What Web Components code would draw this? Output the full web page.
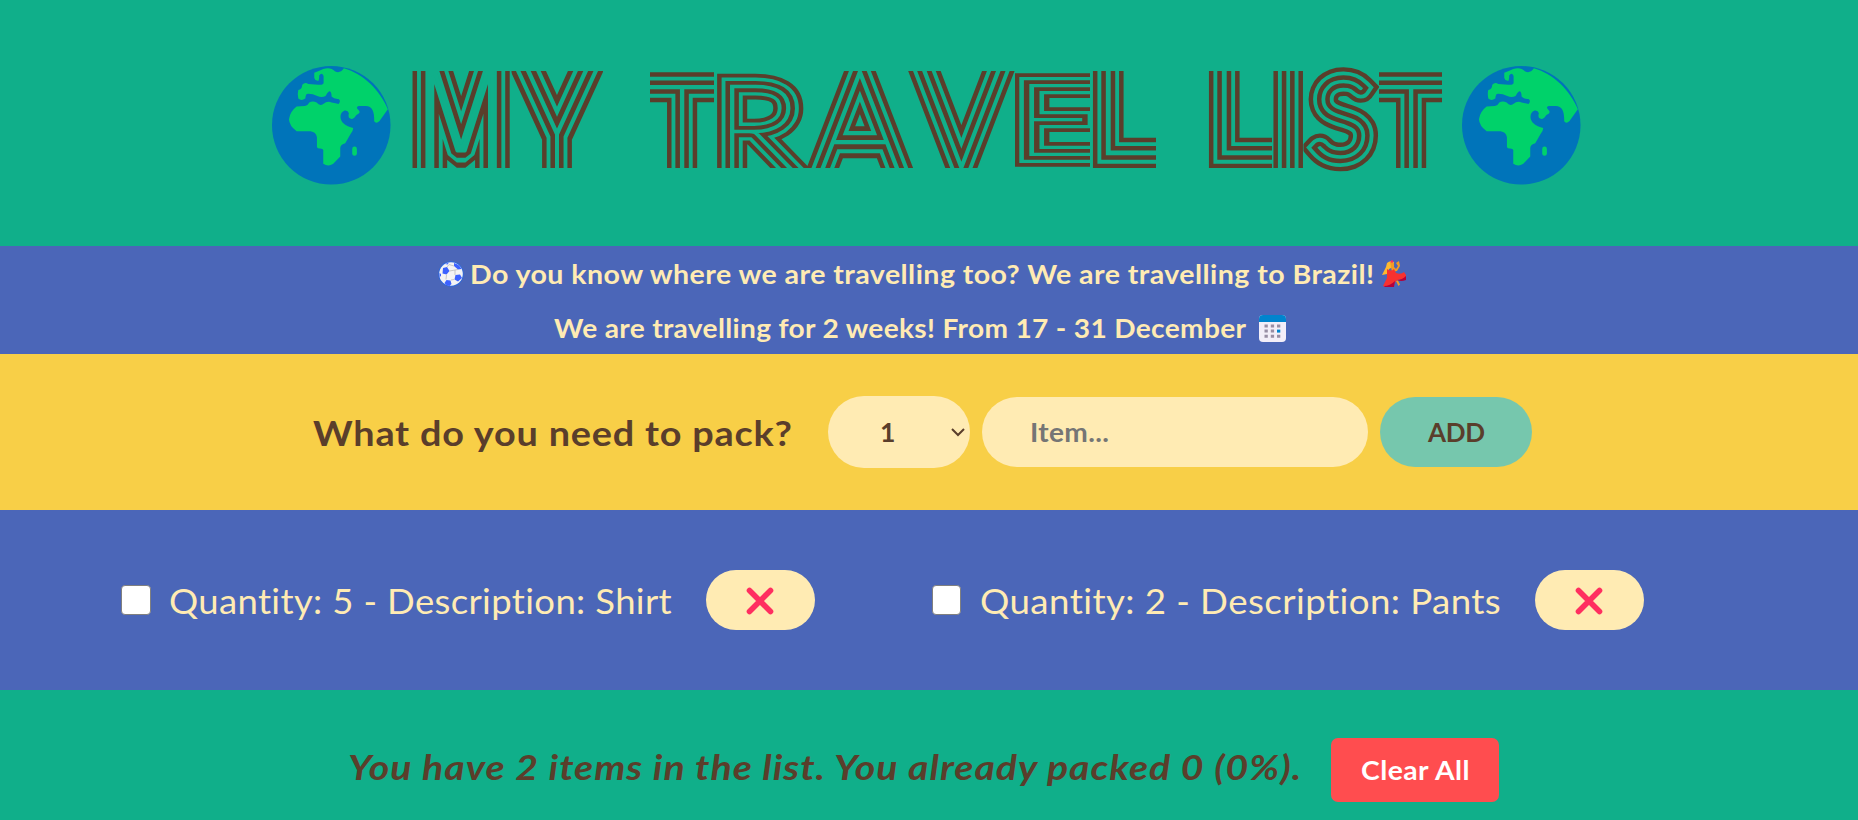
<!DOCTYPE html>
<html lang="en">
<head>
<meta charset="utf-8">
<title>My Travel List</title>
<style>
html,body{margin:0;height:100%}
body{font-family:Lato,"Open Sans",sans-serif;overflow:hidden;background:#10af8a;color:#5a3e2b}
</style>
</head>
<body>
<travel-app></travel-app>
<script>
const define=(name,html,ready)=>customElements.define(name,class extends HTMLElement{
  constructor(){super();this.attachShadow({mode:'open'}).innerHTML=html;}
  connectedCallback(){if(ready)ready(this,this.shadowRoot);}
});

/* Text widened to an exact advance width, partly by glyph width and partly by tracking */
define('fit-text','<style>:host{display:block;white-space:nowrap;flex:none}span{display:inline-block;transform-origin:0 50%}</style><span><slot></slot></span>',(el,root)=>{
  const w=+el.getAttribute('width'),s=root.querySelector('span');
  el.style.width=w+'px';
  const n=s.getBoundingClientRect().width,k=Math.pow(w/n,.65);
  s.style.letterSpacing=((w/k-n)/(el.textContent.length-1)).toFixed(3)+'px';
  s.style.transform=`scaleX(${k.toFixed(4)})`;
});

define('globe-icon',`<style>:host{display:block;width:118.5px;height:118.5px;flex:none}svg{display:block}</style>
<svg width="118.5" height="118.5" viewBox="36 48 356 356"><circle cx="214" cy="226" r="178" fill="#0074ba"/>
<path fill="#00d26a" d="M252 55C310 72 360 120 384 178L359 213Q349 223 343 214C344 185 337 168 318 168L296 168Q286 172 296 180Q304 188 292 194C285 198 285 207 275 207Q262 205 267 190Q264 180 254 182C240 188 238 205 248 218C258 228 270 232 280 234Q280 242 272 252L256 280Q242 284 241 294L241 320L220 342Q205 352 190 342L190 300Q188 296 174 295Q171 294 171 290L171 262Q168 246 152 244L110 244Q88 228 87 208Q90 185 110 170L135 168Q145 166 148 158Q158 152 170 158Q180 170 190 162Q203 152 215 158Q228 160 236 162Q244 153 236 147Q222 148 215 140Q215 124 208 124Q202 128 197 138Q185 144 172 138Q155 130 140 132Q136 138 136 146Q124 154 115 146Q112 130 115 120Q126 118 127 104Q135 96 145 102L175 104Q190 106 191 98L191 78Q186 66 178 76Q178 84 176 92Q166 94 163 84L163 68Q180 62 190 57Q212 50 225 64Q240 72 252 55Z"/>
<rect x="277" y="290" width="14" height="28" rx="7" fill="#00d26a"/></svg>`);

/* Four-line inline display lettering: a hairline face with alternating strokes */
define('striped-title',`<style>:host{display:block;flex:none;width:1044px;height:118.5px}h1{margin:0;font:inherit}svg{display:block;overflow:visible}
.l{stroke-linejoin:miter;stroke-miterlimit:4}.l.bevel{stroke-linejoin:bevel}.l text,.l use{vector-effect:non-scaling-stroke}
</style><h1 aria-label="MY TRAVEL LIST"><svg width="1044" height="118.5" viewBox="405 66 1044 118.5"></svg></h1>`,(el,root)=>{
  // glyph, skeleton box x0 x1 y0 y1, visible box x0 x1 y0 y1, uniform-scale anchor
  const L=[
    ['M',426.5,496.5,62,172,411,511.5,71,168],
    ['Y',523,591,62,186,511.5,603,71,168],
    ['T',640,724,86,184,650,714,71,168,'top'],
    ['R',730.5,799,86,176,715,812,71,168],
    ['A',817,903,71,180,805,916,71,168],
    ['V',919,1004,58,168,905,1015,71,168],
    ['E',1030,1090,84,154.5,1015,1090,71,168],
    ['L',1106,1180,50,153.5,1092,1156,71,168,'bottom'],
    ['L',1222,1296,50,153.5,1208,1272,71,168,'bottom'],
    ['I',1288,1288,50,190,1273,1303.5,71,168],
    ['S',1318.5,1364.5,81.5,158.5,1303.5,1380,66,173],
    ['T',1369,1453,86,184,1379,1442,71,168,'top']];
  const cx=document.createElement('canvas').getContext('2d');
  let out='';
  L.forEach(([c,x0,x1,y0,y1,a,b,t,u,anchor],i)=>{
    const face=c==='M'?'200 100px "DejaVu Sans"':'100 100px Lato';
    cx.font=face;
    const m=cx.measureText(c),l=-m.actualBoundingBoxLeft,r=m.actualBoundingBoxRight,up=m.actualBoundingBoxAscent,dn=m.actualBoundingBoxDescent;
    const sx=x1>x0?(x1-x0)/(r-l):1;
    let sy=(y1-y0)/(up+dn);
    if(anchor){sy=sx;if(anchor==='top')y1=y0+sy*(up+dn);}
    const tx=x1>x0?x0-l*sx:x0-(l+r)/2,ty=y1-dn*sy;
    const sf=Math.sqrt((sx*sx+sy*sy)/2),k=sf/(c==='E'?Math.sqrt(sx*sy):sx);
    out+=`<clipPath id="c${i}"><rect x="${a}" y="${t}" width="${b-a}" height="${u-t}"/></clipPath><g class="l${c==='M'?' bevel':''}" clip-path="url(#c${i})">`;
    out+=`<g fill="#5a3e2b" stroke="#5a3e2b" stroke-width="${28.3*k}"><text id="g${i}" style='font:${face}' transform="matrix(${sx} 0 0 ${sy} ${tx} ${ty})">${c}</text></g>`;
    // a use inherits paint from its own element, so each layer recolours the same glyph
    for(const [col,w] of [['#10af8a',19.3],['#5a3e2b',11.6],['#10af8a',2.5]])out+=`<use href="#g${i}" fill="${col}" stroke="${col}" stroke-width="${w*k}"/>`;
    out+='</g>';
  });
  root.querySelector('svg').innerHTML=out;
});

define('travel-header',`<style>:host{display:flex;height:246px;padding:66px 0 0 272px;box-sizing:border-box;background:#10af8a}striped-title{margin:0 13px 0 14.5px}</style>
<globe-icon></globe-icon><striped-title></striped-title><globe-icon></globe-icon>`);

define('trip-banner',`<style>:host{display:block;height:108px;background:#4b66b8;color:#ffebb3;font-weight:700;font-size:26.8px}
div{display:flex;height:54px;line-height:54px;align-items:center}svg{display:block;flex:none}fit-text{padding-top:2px}
.a{padding-left:438px}.b{padding-left:554px}</style>
<div class="a"><svg style="margin:2px 5.500px 0 0" width="26" height="26" viewBox="0 0 26 26"><circle cx="13" cy="13" r="12.7" fill="#2e69dc"/><circle cx="13" cy="13" r="11.8" fill="#f4f4f4"/><g fill="#3d62ff"><path d="M16 2C20 3 22 5 23.5 8L20 8.5L16 5Z"/><path d="M5 7L9 6L11.5 10L8.5 13.500L4.5 12.500Z"/><path d="M17.500 14L22 13.5L24 17L20 20.500L16.500 18.500Z"/><path d="M8.500 19L12.500 19.500L13.500 23L11.5 25C8.5 24.500 7 23 6.500 22Z"/><path d="M1.500 12V16L3 15V13Z"/><path d="M7 3L11 1.400L9.500 3.500Z"/></g><path d="M11.500 10L17 9L20 8.500M17 9V14M8.500 14L8 18.500M13 19L16 18.500M9 6L11 3.500L16 5" stroke="#bbb" fill="none" stroke-width=".8"/></svg>
<fit-text width="904">Do you know where we are travelling too? We are travelling to Brazil!</fit-text>
<svg style="margin:2px 0 0 8.500px" width="25" height="28" viewBox="0 0 25 28"><path d="M5 3Q8 0 12 2L11 7L7 9L5 14L0 15Q2 11 4 7Z" fill="#ffb92e"/><path d="M8 2Q13 2 12 7L14 9L16 6L14 3L17 1L18 6L15 11L10 12Z" fill="#f59b23"/><circle cx="10" cy="1.500" r="1.300" fill="#f92f60"/><path d="M5 9Q9 12 12 9L14 13Q19 15 22 12L24 15V20Q18 18 14 21L11 26Q5 28 1 26L5 18Z" fill="#f8312f"/><path d="M24 16V20Q19 22 15 20Q20 20 24 16ZM2 26Q8 26 13 21L12 27H3Z" fill="#b4003c"/><path d="M14 21L16.500 26L18 24.500L16 20.500Z" fill="#f59b23"/></svg></div>
<div class="b"><fit-text width="692">We are travelling for 2 weeks! From 17 - 31 December</fit-text>
<svg style="margin:2px 0 0 13px" width="27" height="27" viewBox="0 0 27 27"><rect width="27" height="27" rx="4" fill="#f3eef8"/><path d="M0 7V4Q0 0 4 0H23Q27 0 27 4V7Z" fill="#0084ce"/><path fill="#998ea4" d="M5.500 9.500h3.300v3H5.500zM11.800 9.500h3.300v3h-3.300zM18 9.500h3.300v3H18zM5.500 14.600h3.300v3H5.500zM11.800 14.600h3.300v3h-3.300zM5.500 19.700h3.300v3H5.500zM11.800 19.700h3.300v3h-3.300zM18 19.700h3.300v3H18z"/><path fill="#0084ce" d="M18 14.600h3.300v3H18z"/></svg></div>`);

define('pack-form',`<style>:host{display:flex;align-items:center;height:156px;padding-left:313px;box-sizing:border-box;background:#f8cf47;font-weight:700}
.q{font-size:35px}.s,.i,.b{display:flex;align-items:center;box-sizing:border-box;background:#ffebb3;border-radius:36px;font-size:26.6px;flex:none}
.s{width:142px;height:72px;margin-left:36px;padding-left:52px}.s svg{margin-left:auto;margin-right:5px}
.i{width:386px;height:70px;margin-left:12px;padding-left:48px;color:#757575}
.b{width:152px;height:70px;margin-left:12px;padding-left:48px;background:#76c7ad}</style>
<fit-text class="q" width="479">What do you need to pack?</fit-text>
<div class="s">1<svg width="14" height="9" viewBox="0 0 14 9"><path d="M1 1L7 7L13 1" fill="none" stroke="#5a3e2b" stroke-width="2"/></svg></div>
<div class="i"><fit-text width="79">Item...</fit-text></div>
<div class="b"><fit-text width="57">ADD</fit-text></div>`);

define('pack-item',`<style>:host{display:flex;align-items:center;font-size:35px;color:#ffebb3}
i{width:29.500px;height:29.500px;box-sizing:border-box;background:#fff;border:1.500px solid #808080;border-radius:4px;margin-right:18.500px;flex:none}
b{display:flex;align-items:center;justify-content:center;width:109px;height:60px;border-radius:30px;background:#ffebb3;margin-left:33px;flex:none}svg{margin:2px 1px 0 0}</style>
<i></i><slot></slot><b><svg width="28" height="28" viewBox="0 0 28 28"><path d="M3.500 3.500L24.500 24.500M24.500 3.500L3.500 24.500" stroke="#ff2f60" stroke-width="5.600" stroke-linecap="round"/></svg></b>`);

define('pack-list',`<style>:host{display:flex;align-items:center;height:180px;padding-left:121px;box-sizing:border-box;background:#4b66b8}.two{margin-left:116.500px}</style>
<pack-item><fit-text width="504">Quantity: 5 - Description: Shirt</fit-text></pack-item>
<pack-item class="two"><fit-text width="522">Quantity: 2 - Description: Pants</fit-text></pack-item>`);

define('pack-stats',`<style>:host{display:flex;height:130px;padding:48px 0 0 348px;box-sizing:border-box;background:#10af8a;font-weight:700}
.t{font-size:35px;font-style:italic;line-height:56px}
button{all:unset;width:168px;height:64px;box-sizing:border-box;border-radius:7px;background:#ff4d4f;color:#fff;font-size:26.600px;line-height:63px;padding-left:29.500px;margin-left:30px}</style>
<fit-text class="t" width="953">You have 2 items in the list. You already packed 0 (0%).</fit-text>
<button><fit-text width="108.5">Clear All</fit-text></button>`);

define('travel-app',`<style>:host{display:block;height:820px;overflow:hidden}</style>
<travel-header></travel-header><trip-banner></trip-banner><pack-form></pack-form><pack-list></pack-list><pack-stats></pack-stats>`);
</script>
</body>
</html>
